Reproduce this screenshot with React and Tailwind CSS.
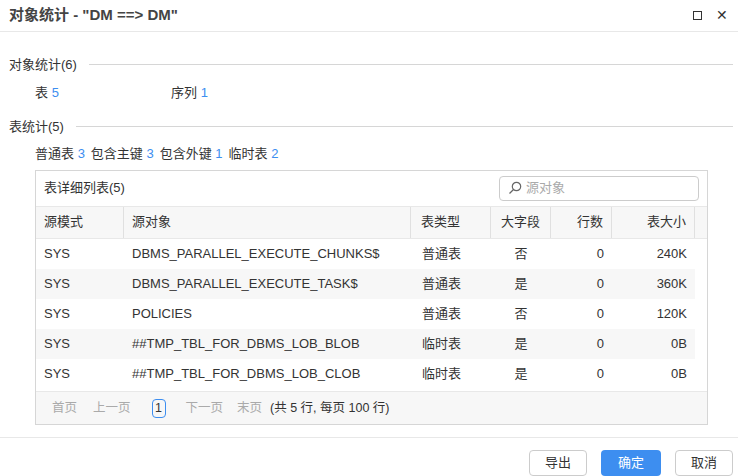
import React from "react";

const rows = [
  ["SYS", "DBMS_PARALLEL_EXECUTE_CHUNKS$", "普通表", "否", "0", "240K"],
  ["SYS", "DBMS_PARALLEL_EXECUTE_TASK$", "普通表", "是", "0", "360K"],
  ["SYS", "POLICIES", "普通表", "否", "0", "120K"],
  ["SYS", "##TMP_TBL_FOR_DBMS_LOB_BLOB", "临时表", "是", "0", "0B"],
  ["SYS", "##TMP_TBL_FOR_DBMS_LOB_CLOB", "临时表", "是", "0", "0B"],
];

const cols = "grid grid-cols-[88px_287px_80px_60px_61px_83px]";

function Section({ title }) {
  return (
    <div className="flex items-center gap-3 text-[13px] text-[#333]">
      <span>{title}</span>
      <div className="flex-1 h-px bg-[#d6d6d6]" />
    </div>
  );
}

export default function App() {
  return (
    <div className="w-[738px] h-[476px] bg-white flex flex-col text-[#333] overflow-hidden" style={{ fontFamily: '"Liberation Sans", "Noto Sans CJK SC", sans-serif' }}>
      <div className="h-[32px] flex items-center justify-between pl-[9px] pr-[10px] border-b border-[#e8e8e8]">
        <span className="text-[15px] font-bold text-[#444]">对象统计 - "DM ==&gt; DM"</span>
        <div className="flex items-center gap-[14px] text-[#333]">
          <div className="w-[9px] h-[9px] border border-[#333]" />
          <span className="text-[14px] leading-none">✕</span>
        </div>
      </div>
      <div className="pl-[9px] pr-[5px] pt-[23px]">
        <Section title="对象统计(6)" />
        <div className="flex text-[13px] pl-[26px] mt-[9px]">
          <span className="w-[136px]">表 <span className="text-[#3d8ef0]">5</span></span>
          <span>序列 <span className="text-[#3d8ef0]">1</span></span>
        </div>
        <div className="mt-[14px]"><Section title="表统计(5)" /></div>
        <div className="text-[13px] pl-[26px] mt-[8px] flex gap-[6px]">
          <span>普通表 <span className="text-[#3d8ef0]">3</span></span>
          <span>包含主键 <span className="text-[#3d8ef0]">3</span></span>
          <span>包含外键 <span className="text-[#3d8ef0]">1</span></span>
          <span>临时表 <span className="text-[#3d8ef0]">2</span></span>
        </div>
      </div>
      <div className="ml-[35px] mt-[6px] w-[673px] h-[258px] border border-[#d6d6d6] flex flex-col text-[13px]">
        <div className="h-[36px] flex items-center justify-between px-[8px] border-b border-[#e8e8e8]">
          <span>表详细列表(5)</span>
          <div className="w-[200px] h-[25px] border border-[#ccc] rounded-sm flex items-center gap-1 px-2 text-[#aaa]">
            <svg width="14" height="14" viewBox="0 0 14 14" fill="none" stroke="#666" strokeWidth="1.2"><circle cx="8.5" cy="5.5" r="4.2" /><path d="M5.5 8.5 1.5 12.5" /></svg>
            <span>源对象</span>
          </div>
        </div>
        <div className="flex bg-[#f7f7f7] border-b border-[#e8e8e8] h-[32px]">
          <div className={cols + " w-[659px]"}>
            {["源模式", "源对象", "表类型", "大字段", "行数", "表大小"].map((h, i) => (
              <div key={h} className={"flex items-center px-[8px] border-r border-[#e0e0e0] " + (i === 2 ? "justify-end pr-[30px]" : i === 3 ? "justify-center" : i > 3 ? "justify-end" : "")}>{h}</div>
            ))}
          </div>
        </div>
        <div className="flex-1">
          {rows.map((r, ri) => (
            <div key={ri} className={cols + " w-[659px] h-[30px] " + (ri % 2 ? "bg-[#f7f7f7]" : "")}>
              {r.map((c, i) => (
                <div key={i} className={"flex items-center px-[8px] " + (i === 2 ? "justify-end pr-[30px]" : i === 3 ? "justify-center" : i > 3 ? "justify-end" : "")}>{c}</div>
              ))}
            </div>
          ))}
        </div>
        <div className="h-[33px] bg-[#f7f7f7] border-t border-[#e8e8e8] flex items-center pl-[16px] text-[12.5px]">
          <span className="text-[#aaa]">首页</span>
          <span className="text-[#aaa] ml-[16px]">上一页</span>
          <span className="ml-[21px] w-[14px] h-[19px] border border-[#3d8ef0] rounded-sm flex items-center justify-center text-[#333]">1</span>
          <span className="text-[#aaa] ml-[20px]">下一页</span>
          <span className="text-[#aaa] ml-[14px]">末页</span>
          <span className="ml-[8px]">(共 5 行, 每页 100 行)</span>
        </div>
      </div>
      <div className="mt-[12px] border-t border-[#e8e8e8] flex justify-end gap-[14px] pr-[5px] pt-[12px] text-[13px]">
        <button className="w-[58px] h-[26px] border border-[#ccc] rounded-sm bg-white">导出</button>
        <button className="w-[60px] h-[26px] rounded-sm bg-[#3d8ef0] text-white">确定</button>
        <button className="w-[58px] h-[26px] border border-[#ccc] rounded-sm bg-white">取消</button>
      </div>
    </div>
  );
}
